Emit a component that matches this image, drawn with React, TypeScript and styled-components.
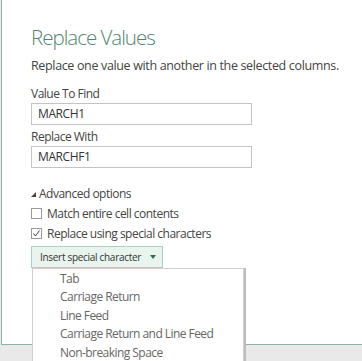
import React from 'react';
import styled, { createGlobalStyle } from 'styled-components';

const GlobalStyle = createGlobalStyle`
  html, body {
    margin: 0;
    padding: 0;
    background: #e9e9e9;
  }
  body {
    font-family: "Open Sans", "Noto Sans", "Liberation Sans", sans-serif;
  }
`

const Page = styled.div`
  width: 362px;
  height: 361px;
  overflow: hidden;
  background: #e9e9e9;
  position: relative;
`

const Dialog = styled.div`
  margin-left: 1px;
  height: 345px;
  box-sizing: border-box;
  background: #fff;
  border-left: 1px solid #8fb2a4;
  border-bottom: 1px solid #8fb2a4;
  padding: 22px 0 0 29px;
`

const Title = styled.h1`
  margin: 0;
  font-size: 20.5px;
  line-height: 30px;
  font-weight: 300;
  color: #4e8670;
  letter-spacing: -1px;
`

const Subtitle = styled.p`
  margin: 5px 0 0;
  font-size: 12.5px;
  line-height: 18px;
  color: #444;
  letter-spacing: -0.35px;
`

const Label = styled.div<{ $top: number }>`
  margin-top: ${(p) => p.$top}px;
  font-size: 12px;
  line-height: 18px;
  color: #444;
  letter-spacing: -0.5px;
`

const Input = styled.div`
  width: 221px;
  height: 22px;
  box-sizing: border-box;
  border: 1px solid #c4c4c4;
  padding-left: 6px;
  font-size: 12px;
  line-height: 20px;
  color: #333;
  letter-spacing: -0.4px;
`

const Toggle = styled.div`
  margin-top: 17px;
  display: flex;
  align-items: center;
  gap: 3px;
  font-size: 12px;
  line-height: 18px;
  color: #444;
  letter-spacing: -0.5px;
`

const Row = styled.div<{ $top: number }>`
  margin-top: ${(p) => p.$top}px;
  display: flex;
  align-items: center;
  gap: 5px;
  height: 18px;
  font-size: 12px;
  color: #444;
  letter-spacing: -0.5px;
`

const Box = styled.span`
  width: 11px;
  height: 11px;
  box-sizing: border-box;
  border: 1px solid #9a9a9a;
  background: #fff;
  display: flex;
  align-items: center;
  justify-content: center;
`

const ButtonWrap = styled.div`
  margin-top: 4px;
  position: relative;
`

const Button = styled.div`
  width: 132px;
  height: 22px;
  box-sizing: border-box;
  background: #e9f4ee;
  border: 1px solid #a9d2c1;
  display: flex;
  align-items: center;
  padding-left: 8px;
  font-size: 10px;
  color: #333;
  letter-spacing: -0.3px;
  white-space: nowrap;
`

const Caret = styled.svg`
  margin-left: 9px;
`

const Menu = styled.ul`
  position: absolute;
  left: 1px;
  top: 22px;
  width: 212px;
  height: 110px;
  margin: 0;
  padding: 1px 0 0;
  list-style: none;
  box-sizing: border-box;
  background: #fff;
  border: 1px solid #cfcfcf;
  box-shadow: 2px 0 0 #bdbdbd;
`

const Item = styled.li`
  padding-left: 27px;
  font-size: 12px;
  line-height: 18.4px;
  color: #666;
  letter-spacing: -0.55px;
`

const items = [
  'Tab',
  'Carriage Return',
  'Line Feed',
  'Carriage Return and Line Feed',
  'Non-breaking Space',
];

export default function App() {
  return (
    <Page>
      <GlobalStyle />
      <Dialog>
        <Title>Replace Values</Title>
        <Subtitle>Replace one value with another in the selected columns.</Subtitle>
        <Label $top={10}>Value To Find</Label>
        <Input>MARCH1</Input>
        <Label $top={3}>Replace With</Label>
        <Input>MARCHF1</Input>
        <Toggle>
          <svg width="5" height="5" viewBox="0 0 5 5">
            <polygon points="5,0 5,5 0,5" fill="#444" />
          </svg>
          Advanced options
        </Toggle>
        <Row $top={1}>
          <Box />
          Match entire cell contents
        </Row>
        <Row $top={2}>
          <Box>
            <svg width="9" height="9" viewBox="0 0 9 9">
              <polyline points="1.5,4.5 3.5,7 7.5,1.5" fill="none" stroke="#444" strokeWidth="1" />
            </svg>
          </Box>
          Replace using special characters
        </Row>
        <ButtonWrap>
          <Button>
            Insert special character
            <Caret width="6" height="4" viewBox="0 0 6 4">
              <polygon points="0,0 6,0 3,4" fill="#2f6b55" />
            </Caret>
          </Button>
          <Menu>
            {items.map((t) => (
              <Item key={t}>{t}</Item>
            ))}
          </Menu>
        </ButtonWrap>
      </Dialog>
    </Page>
  );
}
